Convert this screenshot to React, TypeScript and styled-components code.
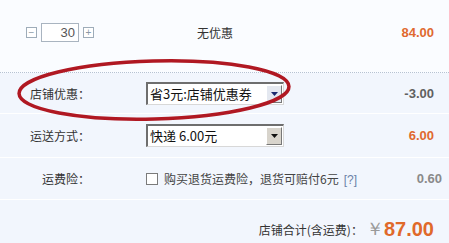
import React from "react";
import styled, { createGlobalStyle } from "styled-components";

const Global = createGlobalStyle`
  html, body { margin: 0; padding: 0; background: #f2f6fd; }
  body { font-family: "Noto Sans CJK SC", "Liberation Sans", sans-serif; }
`;

const Page = styled.div`
  position: relative;
  width: 449px;
  height: 243px;
  overflow: hidden;
  background: #f2f6fd;
`;

const TopRow = styled.div`
  display: grid;
  grid-template-columns: 146px 1fr 100px;
  align-items: center;
  height: 73px;
  box-sizing: border-box;
  background: #fafcff;
  border-bottom: 1px dotted #b6c2d2;
  padding-bottom: 7px;
`;

const Stepper = styled.div`
  display: flex;
  align-items: center;
  padding-left: 26px;
  gap: 4px;
`;

const StepBtn = styled.span`
  display: flex;
  align-items: center;
  justify-content: center;
  width: 9px;
  height: 9px;
  border: 1px solid #9eacb9;
  color: #8a98a6;
  font-family: "Liberation Sans", sans-serif;
  font-size: 10px;
  line-height: 9px;
  background: #fff;
`;

const Qty = styled.span`
  display: block;
  width: 33px;
  height: 17px;
  border: 1px solid #a9b4c0;
  background: #fff;
  color: #555;
  font-family: "Liberation Sans", sans-serif;
  font-size: 13px;
  line-height: 17px;
  text-align: right;
  padding-right: 3px;
`;

const Center = styled.div`
  font-size: 12px;
  color: #333;
  padding-left: 51px;
`;

const Price = styled.div<{ $tone: "orange" | "dark" | "light" }>`
  text-align: right;
  padding-right: 15px;
  font-family: "Liberation Sans", sans-serif;
  font-weight: bold;
  font-size: 13px;
  color: ${(p) =>
    p.$tone === "orange" ? "#e0692f" : p.$tone === "dark" ? "#606060" : "#8a8a8a"};
`;

const Row = styled.div<{ $h: number; $sep?: boolean }>`
  display: grid;
  grid-template-columns: 90px 56px 1fr 100px;
  align-items: center;
  height: ${(p) => p.$h}px;
  box-sizing: border-box;
  border-top: ${(p) => (p.$sep ? "1px solid #ffffff" : "none")};
`;

const Label = styled.div`
  text-align: right;
  font-size: 12px;
  color: #333;
  grid-column: 1;
`;

const Control = styled.div`
  grid-column: 3;
  display: flex;
  align-items: center;
`;

const Select = styled.div`
  display: flex;
  width: 138px;
  height: 23px;
  box-sizing: border-box;
  border-top: 2px solid #6e6e6e;
  border-left: 2px solid #6e6e6e;
  border-right: 1px solid #d8d8d8;
  border-bottom: 1px solid #d8d8d8;
  background: #fff;
`;

const SelectText = styled.span`
  flex: 1;
  font-size: 13px;
  line-height: 20px;
  color: #111;
  padding-left: 2px;
  white-space: nowrap;
`;

const SelectBtn = styled.span<{ $blue?: boolean }>`
  display: flex;
  align-items: center;
  justify-content: center;
  width: 14px;
  margin: 1px;
  background: ${(p) => (p.$blue ? "#e4e8f0" : "#d8d4cc")};
  border-top: 1px solid #fff;
  border-left: 1px solid #fff;
  border-right: 1px solid #777;
  border-bottom: 1px solid #777;
`;

const Check = styled.span`
  display: inline-block;
  width: 10px;
  height: 10px;
  border: 1px solid #7b7b7b;
  background: #fff;
  margin-right: 6px;
`;

const CheckText = styled.span`
  font-size: 12px;
  color: #444;
  white-space: nowrap;
`;

const Help = styled.span`
  color: #6d82a8;
  font-family: "Liberation Sans", sans-serif;
  margin-left: 5px;
`;

const Footer = styled.div`
  display: flex;
  justify-content: flex-end;
  align-items: center;
  height: 44px;
  box-sizing: border-box;
  border-top: 1px solid #ffffff;
  padding-right: 15px;
  padding-top: 15px;
`;

const TotalLabel = styled.span`
  font-size: 12px;
  color: #333;
`;

const Yen = styled.span`
  font-family: "Liberation Sans", sans-serif;
  font-size: 18px;
  color: #9a9a9a;
  margin-left: 3px;
`;

const Total = styled.span`
  font-family: "Liberation Sans", sans-serif;
  font-weight: bold;
  font-size: 20px;
  color: #e0692a;
`;

const Annotation = styled.svg`
  position: absolute;
  left: 0;
  top: 0;
  pointer-events: none;
`;

const Arrow = ({ color }: { color: string }) => (
  <svg width="7" height="4" viewBox="0 0 7 4">
    <path d="M0 0 H7 L3.5 4 Z" fill={color} />
  </svg>
);

export default function App() {
  return (
    <Page>
      <Global />
      <TopRow>
        <Stepper>
          <StepBtn>−</StepBtn>
          <Qty>30</Qty>
          <StepBtn>+</StepBtn>
        </Stepper>
        <Center>无优惠</Center>
        <Price $tone="orange">84.00</Price>
      </TopRow>
      <Row $h={40}>
        <Label>店铺优惠：</Label>
        <Control>
          <Select>
            <SelectText>省3元:店铺优惠券</SelectText>
            <SelectBtn $blue>
              <Arrow color="#1b2a6e" />
            </SelectBtn>
          </Select>
        </Control>
        <Price $tone="dark">-3.00</Price>
      </Row>
      <Row $h={44} $sep>
        <Label>运送方式：</Label>
        <Control>
          <Select>
            <SelectText>快递 6.00元</SelectText>
            <SelectBtn>
              <Arrow color="#111" />
            </SelectBtn>
          </Select>
        </Control>
        <Price $tone="orange">6.00</Price>
      </Row>
      <Row $h={42} $sep>
        <Label>运费险：</Label>
        <Control>
          <Check />
          <CheckText>
            购买退货运费险，退货可赔付6元<Help>[?]</Help>
          </CheckText>
        </Control>
        <Price $tone="light">0.60</Price>
      </Row>
      <Footer>
        <TotalLabel>店铺合计(含运费)：</TotalLabel>
        <Yen>￥</Yen>
        <Total>87.00</Total>
      </Footer>
      <Annotation width="449" height="243" viewBox="0 0 449 243">
        <ellipse
          cx="154"
          cy="90"
          rx="135"
          ry="29"
          fill="none"
          stroke="#b01822"
          strokeWidth="3.5"
          transform="rotate(-1.5 154 90)"
        />
      </Annotation>
    </Page>
  );
}
